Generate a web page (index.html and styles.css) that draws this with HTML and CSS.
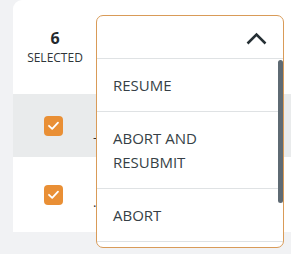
FILE: index.html
```html
<!DOCTYPE html>
<html>
<head>
<meta charset="utf-8">
<link rel="stylesheet" href="styles.css">
</head>
<body>
<div class="card">
  <div class="head-row">
    <div class="sel-cell">
      <div class="count">6</div>
      <div class="sel-label">SELECTED</div>
    </div>
  </div>
  <div class="row row-gray">
    <div class="check-cell"><span class="cb"><svg viewBox="0 0 19 19" width="19" height="19"><path d="M5 9.8 L8.2 12.8 L14 6.6" fill="none" stroke="#fff" stroke-width="1.8" stroke-linecap="round" stroke-linejoin="round"/></svg></span></div>
    <div class="text-cell t1">–</div>
  </div>
  <div class="row row-white">
    <div class="check-cell"><span class="cb"><svg viewBox="0 0 19 19" width="19" height="19"><path d="M5 9.8 L8.2 12.8 L14 6.6" fill="none" stroke="#fff" stroke-width="1.8" stroke-linecap="round" stroke-linejoin="round"/></svg></span></div>
    <div class="text-cell t2">.</div>
  </div>

  <div class="dropdown">
    <div class="dd-head">
      <svg class="chev" viewBox="0 0 21 13" width="21" height="13"><path d="M1.5 11.5 L10.5 2.5 L19.5 11.5" fill="none" stroke="#263035" stroke-width="2.5" stroke-linecap="butt" stroke-linejoin="miter"/></svg>
    </div>
    <div class="dd-list">
      <div class="dd-item">RESUME</div>
      <div class="dd-item">ABORT AND<br>RESUBMIT</div>
      <div class="dd-item">ABORT</div>
      <div class="thumb"></div>
    </div>
  </div>
</div>
</body>
</html>
```
FILE: styles.css
```css
html, body {
  margin: 0;
  padding: 0;
}
body {
  background: #f1f2f4;
  font-family: "Open Sans", "Noto Sans", sans-serif;
  width: 291px;
  height: 254px;
  overflow: hidden;
}
.card {
  position: relative;
  margin-left: 13px;
  width: 278px;
  height: 232px;
  background: #ffffff;
  border-top-left-radius: 9px;
}
.head-row {
  height: 94px;
  display: flex;
}
.sel-cell {
  width: 84px;
  display: flex;
  flex-direction: column;
  align-items: center;
  padding-top: 27px;
  box-sizing: border-box;
}
.count {
  font-size: 16px;
  font-weight: 700;
  color: #23292d;
  line-height: 22px;
}
.sel-label {
  font-size: 12px;
  color: #2f3539;
  line-height: 18px;
  margin-top: 0px;
}
.row {
  display: flex;
  align-items: center;
}
.row-gray {
  height: 63px;
  background: #e9ebec;
}
.row-white {
  height: 75px;
  background: #ffffff;
}
.check-cell {
  width: 84px;
  box-sizing: border-box;
  padding-right: 3px;
  display: flex;
  justify-content: center;
}
.cb {
  width: 19px;
  height: 20px;
  border-radius: 4px;
  background: #e98f35;
  display: block;
}
.cb svg {
  display: block;
}
.text-cell {
  font-size: 13px;
  color: #2a3034;
  margin-left: -4px;
}
.t1 {
  padding-top: 22px;
}
.t2 {
  padding-top: 14px;
}
.dropdown {
  position: absolute;
  left: 83px;
  top: 15px;
  width: 188px;
  height: 233px;
  box-sizing: border-box;
  border: 1px solid #d99b58;
  border-radius: 7px;
  background: #ffffff;
  overflow: hidden;
  display: flex;
  flex-direction: column;
}
.dd-head {
  height: 43px;
  flex: none;
  box-sizing: border-box;
  border-bottom: 1px solid #dfe2e4;
  display: flex;
  align-items: center;
  justify-content: flex-end;
  padding-right: 16px;
  padding-top: 3px;
}
.chev {
  display: block;
}
.dd-list {
  position: relative;
  flex: 1;
  overflow: hidden;
}
.dd-item {
  padding: 14px 16px;
  font-size: 15px;
  line-height: 24px;
  color: #363f46;
  border-bottom: 1px solid #dfe2e4;
}
.thumb {
  position: absolute;
  right: 0;
  top: 1px;
  width: 5px;
  height: 143px;
  border-radius: 3px;
  background: #5e6a73;
}
```
